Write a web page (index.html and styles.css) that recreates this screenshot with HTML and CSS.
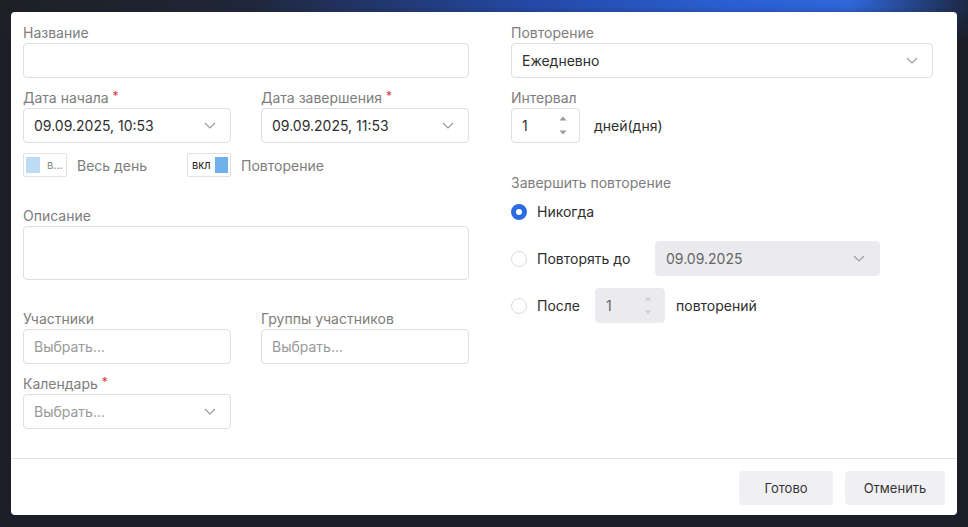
FILE: index.html
```html
<!DOCTYPE html>
<html lang="ru">
<head>
  <meta charset="UTF-8">
  <meta name="viewport" content="width=device-width, initial-scale=1.0">
  <title>Событие</title>
  <link rel="stylesheet" href="styles.css">
</head>
<body>
<div class="dialog">
  <div class="dialog-body">
    <div class="col col-left">
      <div class="field">
        <label class="lbl">Название</label>
        <div class="input"></div>
      </div>

      <div class="row-2">
        <div class="field">
          <label class="lbl">Дата начала <span class="req">*</span></label>
          <div class="input select">09.09.2025, 10:53
            <svg class="chev" width="12" height="7" viewBox="0 0 12 7"><path d="M1 1l5 5 5-5" fill="none" stroke="#9a9a9a" stroke-width="1.1"/></svg>
          </div>
        </div>
        <div class="field">
          <label class="lbl">Дата завершения <span class="req">*</span></label>
          <div class="input select">09.09.2025, 11:53
            <svg class="chev" width="12" height="7" viewBox="0 0 12 7"><path d="M1 1l5 5 5-5" fill="none" stroke="#9a9a9a" stroke-width="1.1"/></svg>
          </div>
        </div>
      </div>

      <div class="toggles">
        <div class="toggle-item">
          <div class="toggle off"><span class="knob"></span><span class="t-text">в...</span></div>
          <span class="t-label">Весь день</span>
        </div>
        <div class="toggle-item">
          <div class="toggle on"><span class="t-text">вкл</span><span class="knob"></span></div>
          <span class="t-label">Повторение</span>
        </div>
      </div>

      <div class="field desc">
        <label class="lbl">Описание</label>
        <div class="input textarea"></div>
      </div>

      <div class="row-2 members">
        <div class="field">
          <label class="lbl">Участники</label>
          <div class="input placeholder">Выбрать...</div>
        </div>
        <div class="field">
          <label class="lbl">Группы участников</label>
          <div class="input placeholder">Выбрать...</div>
        </div>
      </div>

      <div class="row-2">
        <div class="field">
          <label class="lbl">Календарь <span class="req">*</span></label>
          <div class="input select placeholder">Выбрать...
            <svg class="chev" width="12" height="7" viewBox="0 0 12 7"><path d="M1 1l5 5 5-5" fill="none" stroke="#9a9a9a" stroke-width="1.1"/></svg>
          </div>
        </div>
      </div>
    </div>

    <div class="col col-right">
      <div class="field">
        <label class="lbl">Повторение</label>
        <div class="input select">Ежедневно
          <svg class="chev" width="12" height="7" viewBox="0 0 12 7"><path d="M1 1l5 5 5-5" fill="none" stroke="#9a9a9a" stroke-width="1.1"/></svg>
        </div>
      </div>

      <div class="field">
        <label class="lbl">Интервал</label>
        <div class="interval">
          <div class="input number">1
            <span class="spin">
              <svg width="8" height="5" viewBox="0 0 8 5"><path d="M4 0.5L7.5 4.5H0.5z" fill="#9a9a9a"/></svg>
              <svg width="8" height="5" viewBox="0 0 8 5"><path d="M4 4.5L7.5 0.5H0.5z" fill="#9a9a9a"/></svg>
            </span>
          </div>
          <span class="unit">дней(дня)</span>
        </div>
      </div>

      <div class="end-repeat">
        <label class="lbl">Завершить повторение</label>
        <div class="radio-row">
          <span class="radio checked"></span>
          <span class="r-label">Никогда</span>
        </div>
        <div class="radio-row">
          <span class="radio"></span>
          <span class="r-label until">Повторять до</span>
          <div class="input select disabled date">09.09.2025
            <svg class="chev" width="12" height="7" viewBox="0 0 12 7"><path d="M1 1l5 5 5-5" fill="none" stroke="#9a9a9a" stroke-width="1.1"/></svg>
          </div>
        </div>
        <div class="radio-row">
          <span class="radio"></span>
          <span class="r-label after">После</span>
          <div class="input number disabled">1
            <span class="spin">
              <svg width="8" height="5" viewBox="0 0 8 5"><path d="M4 0.5L7.5 4.5H0.5z" fill="#d2d2d6"/></svg>
              <svg width="8" height="5" viewBox="0 0 8 5"><path d="M4 4.5L7.5 0.5H0.5z" fill="#d2d2d6"/></svg>
            </span>
          </div>
          <span class="unit">повторений</span>
        </div>
      </div>
    </div>
  </div>

  <div class="dialog-footer">
    <button class="btn btn-ok">Готово</button>
    <button class="btn btn-cancel">Отменить</button>
  </div>
</div>
</body>
</html>
```

FILE: styles.css
```css
body {
  margin: 0;
  padding: 12px 11px;
  font-family: 'Inter', 'Noto Sans', sans-serif;
  font-size: 14px;
  color: #2e2e2e;
  background:
    linear-gradient(180deg, rgba(27, 31, 43, 0) 0px, rgba(27, 31, 43, 0) 6px, #1c1f2a 40px),
    linear-gradient(90deg, #1e2024 0%, #1f2638 25%, #2449a8 55%, #2a5fd2 75%, #2f66d8 88%, #1c2844 100%);
  height: 527px;
  box-sizing: border-box;
  overflow: hidden;
}
.dialog {
  width: 946px;
  height: 503px;
  background: #fff;
  border-radius: 4px;
  display: flex;
  flex-direction: column;
}
.dialog-body {
  flex: 1;
  display: flex;
  gap: 42px;
  padding: 11px 12px 0 12px;
}
.col-left {
  width: 446px;
}
.col-right {
  width: 422px;
}
.field {
  margin-bottom: 10px;
}
.field.desc {
  margin-bottom: 29px;
}
.lbl {
  display: block;
  line-height: 20px;
  color: #7d7d7d;
}
.req {
  color: #d9363e;
  font-size: 12px;
  vertical-align: top;
  line-height: 16px;
}
.input {
  height: 35px;
  box-sizing: border-box;
  border: 1px solid #dedede;
  border-radius: 4px;
  padding: 0 10px;
  display: flex;
  align-items: center;
}
.select {
  justify-content: space-between;
  padding-right: 14px;
}
.textarea {
  height: 54px;
}
.placeholder {
  color: #999;
}
.row-2 {
  display: grid;
  grid-template-columns: 208px 208px;
  gap: 30px;
}
.toggles {
  display: flex;
  margin-bottom: 29px;
}
.toggle-item {
  display: flex;
  align-items: center;
  width: 164px;
}
.toggle {
  width: 44px;
  height: 24px;
  box-sizing: border-box;
  border: 1px solid #e2e2e2;
  border-radius: 2px;
  display: flex;
  align-items: center;
  padding: 0 2px;
  gap: 7px;
}
.toggle .knob {
  width: 14px;
  height: 16px;
  flex-shrink: 0;
}
.toggle.off .knob {
  background: #bcdcf6;
}
.toggle.on {
  justify-content: space-between;
  padding: 0 2px 0 4px;
  gap: 0;
}
.toggle.on .knob {
  background: #6fb0ea;
  width: 13px;
}
.t-text {
  font-size: 11px;
  color: #888;
}
.toggle.on .t-text {
  color: #222;
}
.t-label {
  margin-left: 10px;
  color: #7d7d7d;
}
.members .field {
  margin-bottom: 10px;
}
.number {
  width: 69px;
  justify-content: space-between;
  padding-right: 12px;
}
.spin {
  display: flex;
  flex-direction: column;
  gap: 9px;
}
.spin svg {
  display: block;
}
.interval {
  display: flex;
  align-items: center;
}
.unit {
  margin-left: 14px;
}
.end-repeat {
  margin-top: 30px;
}
.end-repeat .lbl {
  margin-bottom: 1px;
}
.radio-row {
  display: flex;
  align-items: center;
  height: 35px;
  margin-bottom: 12px;
}
.radio {
  width: 16px;
  height: 16px;
  box-sizing: border-box;
  border: 1px solid #dcdcdc;
  border-radius: 50%;
  margin-right: 10px;
}
.radio.checked {
  border: 5px solid #2b6ce2;
}
.r-label.until {
  width: 118px;
}
.r-label.after {
  width: 58px;
}
.disabled {
  background: #ebebef;
  border-color: #ebebef;
  color: #666;
}
.date {
  width: 225px;
}
.radio-row .number {
  width: 70px;
}
.radio-row .unit {
  margin-left: 11px;
}
.dialog-footer {
  border-top: 1px solid #e3e3e3;
  display: flex;
  justify-content: flex-end;
  gap: 12px;
  padding: 12px 12px 10px;
}
.btn {
  height: 34px;
  border: none;
  border-radius: 4px;
  background: #f0f0f4;
  font-family: inherit;
  font-size: 13px;
  color: #333;
}
.btn-ok {
  width: 94px;
}
.btn-cancel {
  width: 100px;
}
```
